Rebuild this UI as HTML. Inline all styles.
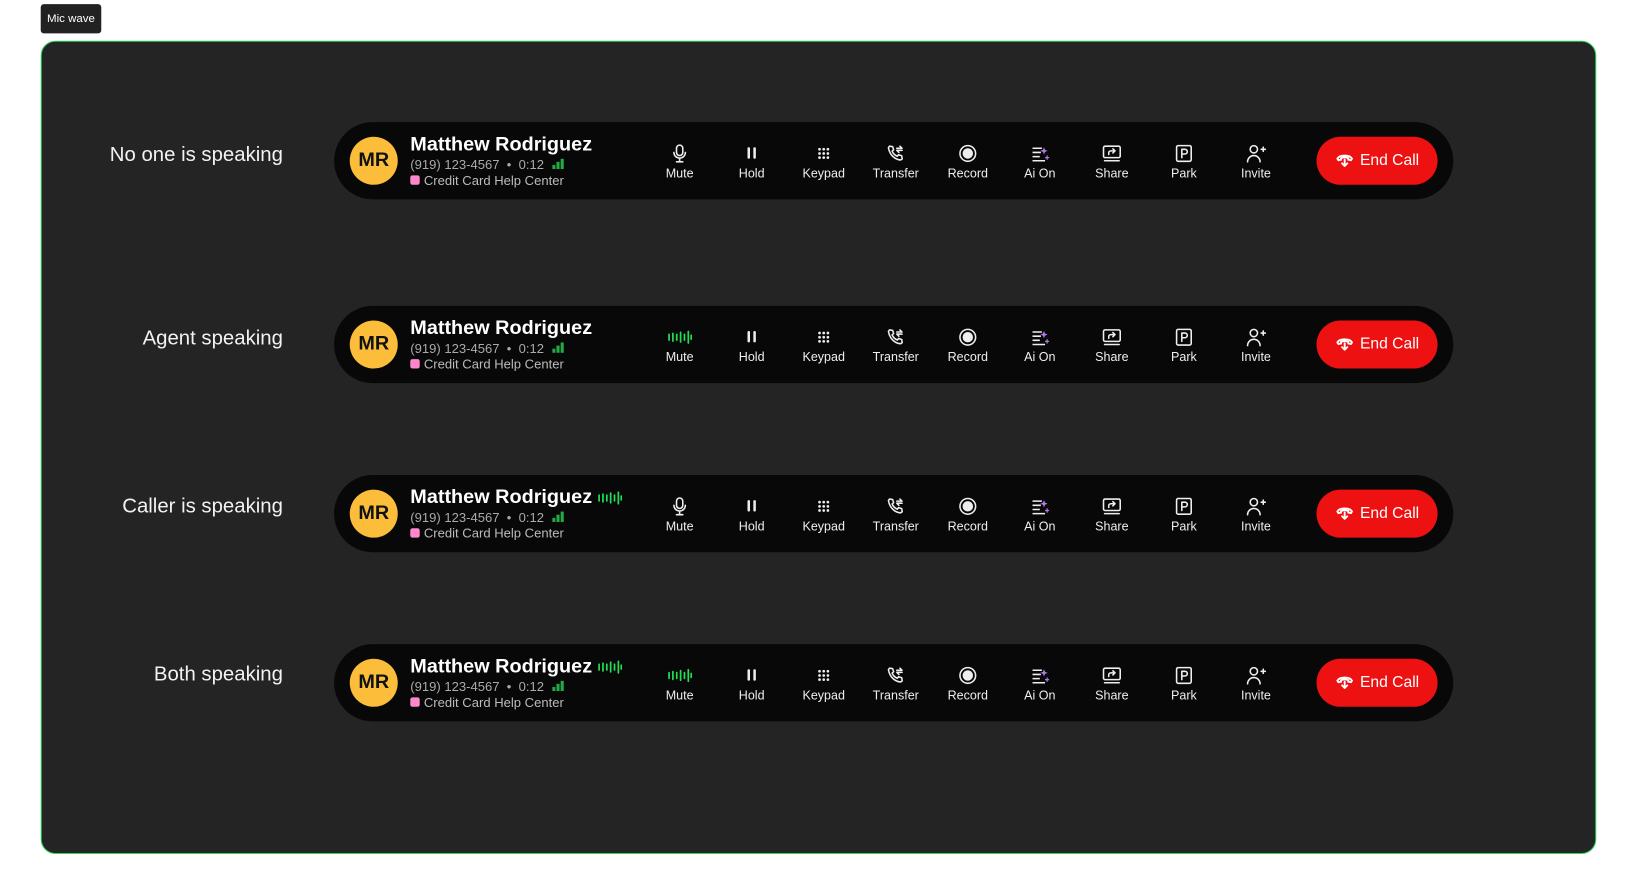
<!DOCTYPE html><html><head><style>
body{margin:0;width:1638px;height:895px;background:#fff;font-family:"Liberation Sans",sans-serif;position:relative;overflow:hidden}
#w{position:absolute;left:0;top:0;width:1569px;height:857px;transform:scale(1.044);transform-origin:0 0}
.tip{position:absolute;left:39px;top:4px;width:58px;height:28px;background:#222;border-radius:3px;color:#fff;font-size:11px;line-height:28px;text-align:center}
.box{position:absolute;left:39px;top:39px;width:1488px;height:777px;background:#242424;border:1px solid #2fd35a;border-radius:14px}
.lbl{position:absolute;right:1298px;color:#f2f2f2;font-size:19.5px;white-space:nowrap}
.bar{position:absolute;left:320px;width:1072px;height:74px;background:#080808;border-radius:37px}
.av{position:absolute;left:15px;top:14px;width:46px;height:46px;border-radius:50%;background:#fbbd3a;color:#111;font-weight:bold;font-size:19px;text-align:center;line-height:46px}
.nm{position:absolute;left:73px;top:11px;color:#fff;font-weight:bold;font-size:19px;white-space:nowrap}
.ph{position:absolute;left:73px;top:34px;color:#aaa;font-size:12.5px;white-space:nowrap}
.cc{position:absolute;left:73px;top:49px;color:#bbb;font-size:12.5px;white-space:nowrap}
.cc i{display:inline-block;width:9px;height:9px;background:#ff88cc;border-radius:2px;margin-right:4px}
.btn{position:absolute;top:21px;width:66px;margin-left:-33px;text-align:center;color:#eee;font-size:12px}
.btn svg{display:block;margin:0 auto 3px;height:18px}
.end{position:absolute;left:941px;top:14px;width:116px;height:46px;border-radius:23px;background:#ee1111;color:#fff;font-size:15px;line-height:46px;text-align:center}
</style></head><body><div id="w">
<div class="tip">Mic wave</div>
<div class="box"></div>
<div class="lbl" style="top:137px">No one is speaking</div>
<div class="lbl" style="top:313px">Agent speaking</div>
<div class="lbl" style="top:474px">Caller is speaking</div>
<div class="lbl" style="top:635px">Both speaking</div>
<script>
const wave='<svg width="24" height="14" viewBox="0 0 26 14" style="vertical-align:middle" stroke="#22dd55" stroke-width="1.8" stroke-linecap="round"><path d="M2 4v6M6 3v8M10 4v6M14 2v10M18 4v6M22 1v12M25 5v4"/></svg>';
const sig='<svg width="12" height="10" viewBox="0 0 12 10" style="margin-left:8px"><rect x="0" y="6" width="3" height="4" fill="#22aa44"/><rect x="4" y="3" width="3" height="7" fill="#22aa44"/><rect x="8" y="0" width="3" height="10" fill="#22aa44"/></svg>';
const s='fill="none" stroke="#eee" stroke-width="1.5" stroke-linecap="round" stroke-linejoin="round"';
const mic=`<svg width="18" viewBox="0 0 18 18" ${s}><rect x="6" y="1" width="6" height="10" rx="3"/><path d="M3.5 8a5.5 5.5 0 0 0 11 0M9 13.5V17M6 17h6"/></svg>`;
const icons=[
`<svg width="18" viewBox="0 0 18 18"><rect x="5" y="3" width="2.4" height="11" rx="1" fill="#eee"/><rect x="10.6" y="3" width="2.4" height="11" rx="1" fill="#eee"/></svg>`,
`<svg width="18" viewBox="0 0 18 18" fill="#eee">${[4,8,12].map(y=>[4,8,12].map(x=>`<circle cx="${x+1}" cy="${y+1}" r="1.3"/>`).join('')).join('')}</svg>`,
`<svg width="18" viewBox="0 0 18 18" ${s}><path d="M3 2l3 .5 1 3-1.5 1.2a9 9 0 0 0 5 5l1.2-1.5 3 1 .5 3-1.5 1C8 15 3 10 2 3.5z"/><path d="M10 4h5l-2-2M15 6h-5l2 2"/></svg>`,
`<svg width="18" viewBox="0 0 18 18"><circle cx="9" cy="9" r="7.5" fill="none" stroke="#eee" stroke-width="1.5"/><circle cx="9" cy="9" r="5" fill="#eee"/></svg>`,
`<svg width="18" viewBox="0 0 18 18"><path d="M2 4h9M2 8h8M2 12h7M2 16h12" stroke="#eee" stroke-width="1.5" fill="none"/><path d="M13 3l1 2.5 2.5 1-2.5 1-1 2.5-1-2.5-2.5-1 2.5-1z" fill="#b07ce8"/><path d="M16 11v4M14 13h4" stroke="#b07ce8" stroke-width="1.2"/></svg>`,
`<svg width="20" viewBox="0 0 20 18" ${s}><rect x="2" y="2" width="16" height="11" rx="1.5"/><path d="M3 16h14M7 10V8.5a2 2 0 0 1 2-2h4M11 4.5l2 2-2 2"/></svg>`,
`<svg width="18" viewBox="0 0 18 18" ${s}><rect x="2" y="1.5" width="14" height="15" rx="1.5"/><path d="M7 13V5h3a2.2 2.2 0 0 1 0 4.5H7"/></svg>`,
`<svg width="20" viewBox="0 0 20 18" ${s}><circle cx="8" cy="5" r="3.5"/><path d="M2 17a6 6 0 0 1 12 0M15 5h4M17 3v4"/></svg>`];
const names=['Hold','Keypad','Transfer','Record','Ai On','Share','Park','Invite'];
[[117,0,0],[293,1,0],[455,0,1],[617,1,1]].forEach(([t,a,c])=>{
let h=`<div class="bar" style="top:${t}px"><div class="av">MR</div><div class="nm">Matthew Rodriguez ${c?wave:''}</div><div class="ph">(919) 123-4567 &nbsp;•&nbsp; 0:12${sig}</div><div class="cc"><i></i>Credit Card Help Center</div>`;
h+=`<div class="btn" style="left:331px">${a?`<div style="height:18px;margin-bottom:3px;line-height:18px">${wave}</div>`:mic}Mute</div>`;
names.forEach((n,i)=>h+=`<div class="btn" style="left:${400+69*i}px">${icons[i]}${n}</div>`);
h+=`<div class="end"><svg width="18" height="14" viewBox="0 0 18 14" style="vertical-align:-2px;margin-right:6px" fill="none" stroke="#fff" stroke-width="1.8" stroke-linecap="round"><path d="M2 6c1-2 4-3 7-3s6 1 7 3l-1 1.5-2.5-.5V5.5a10 10 0 0 0-7 0V7L3 7.5z"/><path d="M9 7v6M6.5 10.5L9 13l2.5-2.5"/></svg>End Call</div></div>`;
document.write(h);});
</script>
</div></body></html>
